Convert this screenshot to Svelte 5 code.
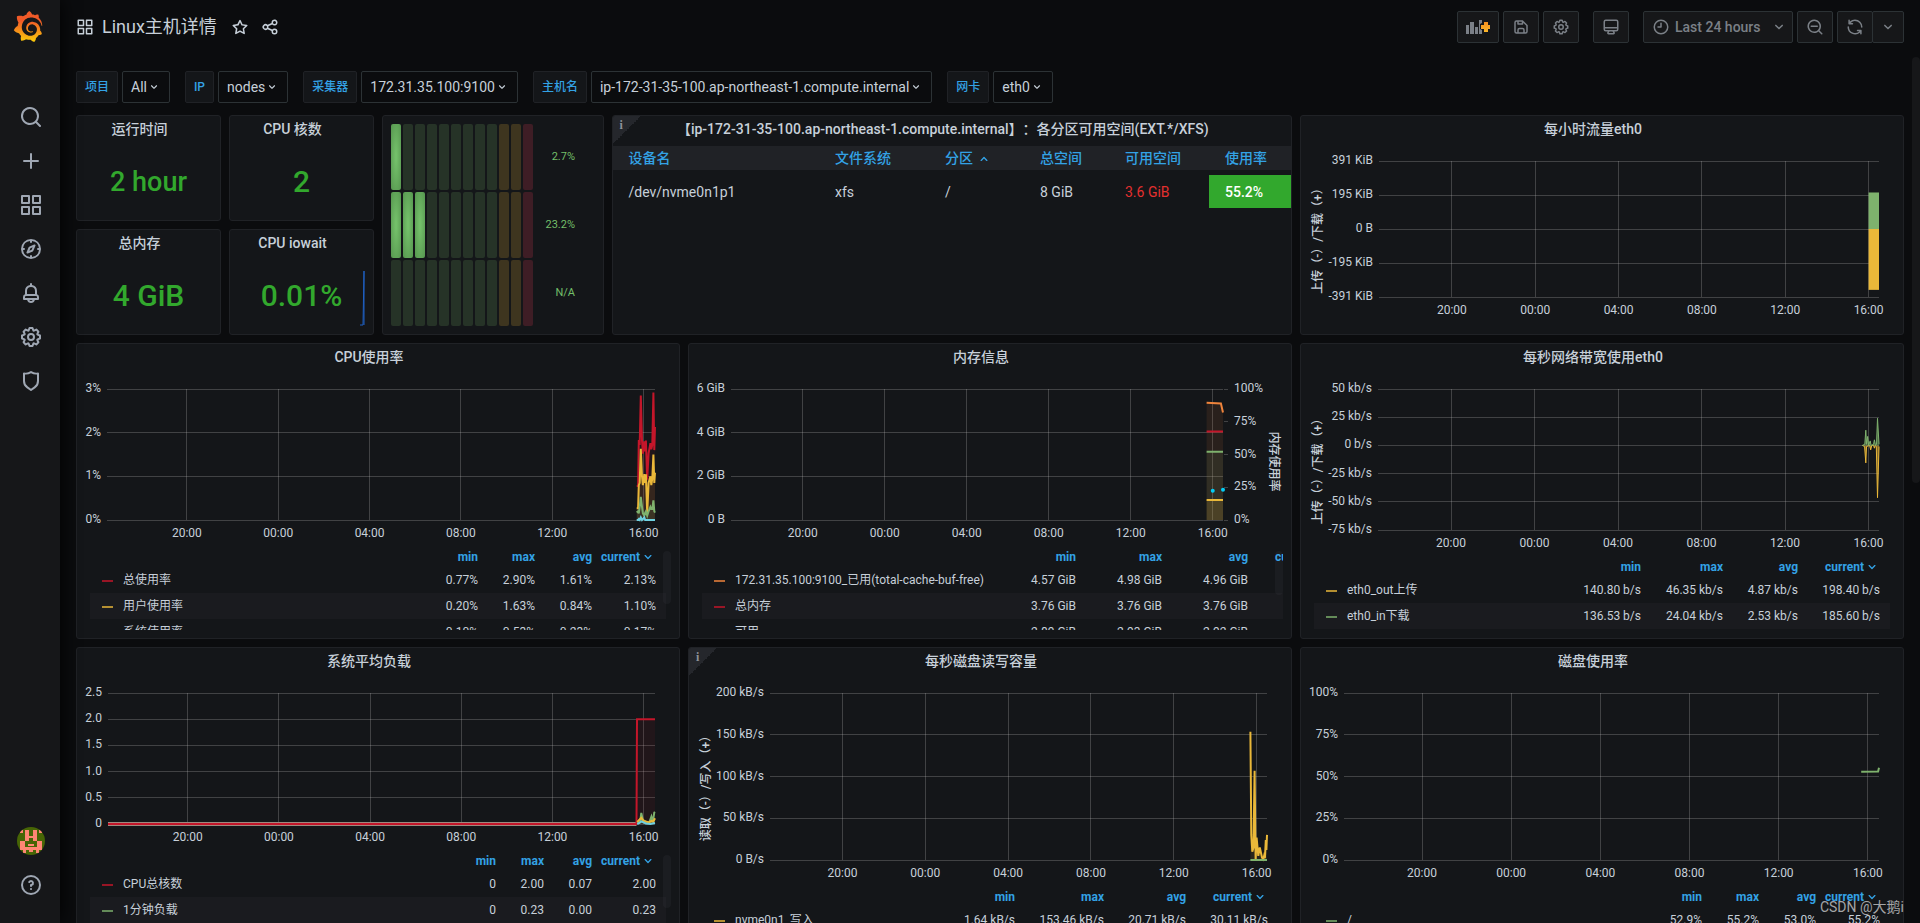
<script>
  const ICONS = {
    search: 'M21.71,20.29,18,16.61A9,9,0,1,0,16.61,18l3.68,3.68a1,1,0,0,0,1.42,0A1,1,0,0,0,21.71,20.29ZM11,18a7,7,0,1,1,7-7A7,7,0,0,1,11,18Z',
    plus: 'M19,11H13V5a1,1,0,0,0-2,0v6H5a1,1,0,0,0,0,2h6v6a1,1,0,0,0,2,0V13h6a1,1,0,0,0,0-2Z',
    apps: 'M10,13H3a1,1,0,0,0-1,1v7a1,1,0,0,0,1,1h7a1,1,0,0,0,1-1V14A1,1,0,0,0,10,13ZM9,20H4V15H9ZM21,2H14a1,1,0,0,0-1,1v7a1,1,0,0,0,1,1h7a1,1,0,0,0,1-1V3A1,1,0,0,0,21,2ZM20,9H15V4h5Zm1,4H14a1,1,0,0,0-1,1v7a1,1,0,0,0,1,1h7a1,1,0,0,0,1-1V14A1,1,0,0,0,21,13Zm-1,7H15V15h5ZM10,2H3A1,1,0,0,0,2,3v7a1,1,0,0,0,1,1h7a1,1,0,0,0,1-1V3A1,1,0,0,0,10,2ZM9,9H4V4H9Z',
    compass: 'M12,2A10,10,0,1,0,22,12,10,10,0,0,0,12,2Zm1,17.93V19a1,1,0,0,0-2,0v.93A8,8,0,0,1,4.07,13H5a1,1,0,0,0,0-2H4.07A8,8,0,0,1,11,4.07V5a1,1,0,0,0,2,0V4.07A8,8,0,0,1,19.93,11H19a1,1,0,0,0,0,2h.93A8,8,0,0,1,13,19.93ZM15.14,7.55l-5,2.12a1,1,0,0,0-.52.52l-2.12,5a1,1,0,0,0,.21,1.1,1,1,0,0,0,.7.29.93.93,0,0,0,.4-.08l5-2.12a1,1,0,0,0,.52-.52l2.12-5a1,1,0,0,0-1.31-1.31Zm-2.49,5.1-2.28,1,1-2.28,2.28-1Z',
    bell: 'M18,13.18V10a6,6,0,0,0-5-5.91V3a1,1,0,0,0-2,0V4.09A6,6,0,0,0,6,10v3.18A3,3,0,0,0,4,16v2a1,1,0,0,0,1,1H8.14a4,4,0,0,0,7.72,0H19a1,1,0,0,0,1-1V16A3,3,0,0,0,18,13.18ZM8,10a4,4,0,0,1,8,0v3H8Zm4,10a2,2,0,0,1-1.72-1h3.44A2,2,0,0,1,12,20Zm6-3H6V16a1,1,0,0,1,1-1H17a1,1,0,0,1,1,1Z',
    cog: 'M21.32,9.55l-1.89-.63.89-1.78A1,1,0,0,0,20.13,6L18,3.87a1,1,0,0,0-1.15-.19l-1.78.89-.63-1.89A1,1,0,0,0,13.5,2h-3a1,1,0,0,0-.95.68L8.92,4.57,7.14,3.68A1,1,0,0,0,6,3.87L3.87,6a1,1,0,0,0-.19,1.15l.89,1.78-1.89.63A1,1,0,0,0,2,10.5v3a1,1,0,0,0,.68.95l1.89.63-.89,1.78A1,1,0,0,0,3.87,18L6,20.13a1,1,0,0,0,1.15.19l1.78-.89.63,1.89a1,1,0,0,0,.95.68h3a1,1,0,0,0,.95-.68l.63-1.89,1.78.89A1,1,0,0,0,18,20.13L20.13,18a1,1,0,0,0,.19-1.15l-.89-1.78,1.89-.63A1,1,0,0,0,22,13.5v-3A1,1,0,0,0,21.32,9.55ZM20,12.78l-1.2.4A2,2,0,0,0,17.64,16l.57,1.14-1.1,1.1L16,17.64a2,2,0,0,0-2.79,1.16l-.4,1.2H11.22l-.4-1.2A2,2,0,0,0,8,17.64l-1.14.57-1.1-1.1L6.36,16A2,2,0,0,0,5.2,13.18L4,12.78V11.22l1.2-.4A2,2,0,0,0,6.36,8L5.79,6.89l1.1-1.1L8,6.36A2,2,0,0,0,10.82,5.2l.4-1.2h1.56l.4,1.2A2,2,0,0,0,16,6.36l1.14-.57,1.1,1.1L17.64,8a2,2,0,0,0,1.16,2.79l1.2.4ZM12,8a4,4,0,1,0,4,4A4,4,0,0,0,12,8Zm0,6a2,2,0,1,1,2-2A2,2,0,0,1,12,14Z',
    shield: 'M19.63,3.65a1,1,0,0,0-.84-.2,8,8,0,0,1-6.22-1.27,1,1,0,0,0-1.14,0A8,8,0,0,1,5.21,3.45a1,1,0,0,0-.84.2A1,1,0,0,0,4,4.43v7.45a9,9,0,0,0,3.77,7.33l3.65,2.6a1,1,0,0,0,1.16,0l3.65-2.6A9,9,0,0,0,20,11.88V4.43A1,1,0,0,0,19.63,3.65ZM18,11.88a7,7,0,0,1-2.93,5.7L12,19.77,8.93,17.58A7,7,0,0,1,6,11.88V5.58a10,10,0,0,0,6-1.39,10,10,0,0,0,6,1.39Z',
    help: 'M11.29,15.29a1.58,1.58,0,0,0-.12.15.76.76,0,0,0-.09.18.64.64,0,0,0-.06.18,1.36,1.36,0,0,0,0,.2.84.84,0,0,0,.08.38.9.9,0,0,0,.54.54.94.94,0,0,0,.76,0,.9.9,0,0,0,.54-.54A1,1,0,0,0,13,16a1,1,0,0,0-.29-.71A1,1,0,0,0,11.29,15.29ZM12,2A10,10,0,1,0,22,12,10,10,0,0,0,12,2Zm0,18a8,8,0,1,1,8-8A8,8,0,0,1,12,20ZM12,7A3,3,0,0,0,9.4,8.5a1,1,0,1,0,1.73,1A1,1,0,0,1,12,9a1,1,0,0,1,0,2,1,1,0,0,0-1,1v1a1,1,0,0,0,2,0v-.18A3,3,0,0,0,12,7Z',
    star: 'M22,9.67A1,1,0,0,0,21.14,9l-5.69-.83L12.9,3a1,1,0,0,0-1.8,0L8.55,8.16,2.86,9a1,1,0,0,0-.81.68,1,1,0,0,0,.25,1l4.13,4-1,5.68A1,1,0,0,0,6.9,21.44L12,18.77l5.1,2.67a.93.93,0,0,0,.46.12,1,1,0,0,0,.59-.19,1,1,0,0,0,.4-1l-1-5.68,4.13-4A1,1,0,0,0,22,9.67Zm-6.15,4a1,1,0,0,0-.29.88l.72,4.2-3.76-2a1.06,1.06,0,0,0-.94,0l-3.76,2,.72-4.2a1,1,0,0,0-.29-.88l-3-3,4.21-.61a1,1,0,0,0,.76-.55L12,5.7l1.88,3.82a1,1,0,0,0,.76.55l4.21.61Z',
    share: 'M18,14a4,4,0,0,0-3.08,1.48l-5.1-2.35a3.64,3.64,0,0,0,0-2.26l5.1-2.35A4,4,0,1,0,14,6a4.17,4.17,0,0,0,.07.71L8.79,9.14a4,4,0,1,0,0,5.72l5.28,2.43A4.17,4.17,0,0,0,14,18a4,4,0,1,0,4-4ZM18,4a2,2,0,1,1-2,2A2,2,0,0,1,18,4ZM6,14a2,2,0,1,1,2-2A2,2,0,0,1,6,14Zm12,6a2,2,0,1,1,2-2A2,2,0,0,1,18,20Z',
    save: 'M20.71,9.29l-6-6a1,1,0,0,0-.32-.21A1.09,1.09,0,0,0,14,3H6A3,3,0,0,0,3,6V18a3,3,0,0,0,3,3H18a3,3,0,0,0,3-3V10A1,1,0,0,0,20.71,9.29ZM9,5h4V7H9Zm6,14H9V16a1,1,0,0,1,1-1h4a1,1,0,0,1,1,1Zm4-1a1,1,0,0,1-1,1H17V16a3,3,0,0,0-3-3H10a3,3,0,0,0-3,3v3H6a1,1,0,0,1-1-1V6A1,1,0,0,1,6,5H7V8A1,1,0,0,0,8,9h6a1,1,0,0,0,1-1V6.41l4,4Z',
    monitor: 'M19,2H5A3,3,0,0,0,2,5V15a3,3,0,0,0,3,3H7.64l-.58,1a2,2,0,0,0,0,2,2,2,0,0,0,1.75,1h6.46A2,2,0,0,0,17,21a2,2,0,0,0,0-2l-.59-1H19a3,3,0,0,0,3-3V5A3,3,0,0,0,19,2ZM8.77,20,10,18H14l1.2,2ZM20,15a1,1,0,0,1-1,1H5a1,1,0,0,1-1-1V14H20Zm0-3H4V5A1,1,0,0,1,5,4H19a1,1,0,0,1,1,1Z',
    clock: 'M12,2A10,10,0,1,0,22,12,10,10,0,0,0,12,2Zm0,18a8,8,0,1,1,8-8A8,8,0,0,1,12,20ZM12,6a1,1,0,0,0-1,1v4H8a1,1,0,0,0,0,2h4a1,1,0,0,0,1-1V7A1,1,0,0,0,12,6Z',
    zoomOut: 'M21.71,20.29,18,16.61A9,9,0,1,0,16.61,18l3.68,3.68a1,1,0,0,0,1.42,0A1,1,0,0,0,21.71,20.29ZM11,18a7,7,0,1,1,7-7A7,7,0,0,1,11,18Zm4-8H7a1,1,0,0,0,0,2h8a1,1,0,0,0,0-2Z',
    sync: 'M19.91,15.51H15.38a1,1,0,0,0,0,2h2.4A8,8,0,0,1,4,12a1,1,0,1,0-2,0,10,10,0,0,0,16.88,7.23V21a1,1,0,0,0,2,0V16.5A1,1,0,0,0,19.91,15.51ZM12,2A10,10,0,0,0,5.12,4.77V3a1,1,0,0,0-2,0V7.5a1,1,0,0,0,1,1h4.5a1,1,0,0,0,0-2H6.22A8,8,0,0,1,20,12a1,1,0,0,0,2,0A10,10,0,0,0,12,2Z',
    down: 'M17,9.17a1,1,0,0,0-1.41,0L12,12.71,8.46,9.17a1,1,0,0,0-1.41,0,1,1,0,0,0,0,1.42l4.24,4.24a1,1,0,0,0,1.42,0L17,10.59A1,1,0,0,0,17,9.17Z',
    up: 'M17,13.41,12.71,9.17a1,1,0,0,0-1.42,0L7.05,13.41a1,1,0,0,0,0,1.42,1,1,0,0,0,1.41,0L12,11.29l3.54,3.54a1,1,0,0,0,.7.29,1,1,0,0,0,.71-.29A1,1,0,0,0,17,13.41Z'
  };

  const RED = '#c4162a';
  const YELLOW = '#eab839';
  const GREEN = '#7eb26d';
  const CYAN = '#6ed0e0';
  const ORANGE = '#ef843c';

  const nav = [
    ['search', 'Search'], ['plus', 'Create'], ['apps', 'Dashboards'], ['compass', 'Explore'],
    ['bell', 'Alerting'], ['cog', 'Configuration'], ['shield', 'Server Admin']
  ];

  const filters = [
    ['项目', 'All'], ['IP', 'nodes'], ['采集器', '172.31.35.100:9100'],
    ['主机名', 'ip-172-31-35-100.ap-northeast-1.compute.internal'], ['网卡', 'eth0']
  ];

  const gauge = [['2.7%', 1], ['23.2%', 3], ['N/A', 0]];
  const cells = Array.from({ length: 12 }, (_, i) => (i < 9 ? 'ok' : i < 11 ? 'warn' : 'crit'));

  // The time axis covers 24 hours, starting at 16:30.
  const hours = [['20:00', 3.5], ['00:00', 7.5], ['04:00', 11.5], ['08:00', 15.5], ['12:00', 19.5], ['16:00', 23.5]];

  const cpuT = [23.2, 23.26, 23.29, 23.33, 23.38, 23.43, 23.47, 23.53, 23.57, 23.6, 23.66, 23.72, 23.8, 23.84, 23.88, 23.93, 23.97, 24];
  const zip = (v) => v.map((y, i) => [cpuT[i], y]);

  let charts = $state([
    {
      title: '每小时流量eth0', w: 602, rows: 'short', left: 79, right: 25, bottom: 182, min: -391, max: 391,
      ticks: [[391, '391 KiB'], [195.5, '195 KiB'], [0, '0 B'], [-195.5, '-195 KiB'], [-391, '-391 KiB']],
      yTitle: '上传（-）/下载（+）', series: [],
      bars: [[23.5, 24, 0, 210, GREEN], [23.5, 24, -350, 0, YELLOW]]
    },
    {
      title: 'CPU使用率', w: 602, left: 31, right: 25, bottom: 177, min: 0, max: 3,
      ticks: [[3, '3%'], [2, '2%'], [1, '1%'], [0, '0%']],
      series: [
        { c: RED, fill: 0.08, pts: zip([0.78, 0.78, 1.83, 1.72, 2.85, 1.83, 1.52, 1.8, 1.57, 1.82, 0.92, 1.53, 1.76, 1.62, 1.72, 2.92, 1.6, 2.13]) },
        { c: YELLOW, fill: 0.1, pts: zip([0.27, 0.27, 0.8, 0.85, 1.63, 1, 0.8, 1.05, 0.85, 1.05, 0.15, 0.85, 1, 0.8, 0.95, 1.5, 0.85, 1.08]) },
        { c: GREEN, fill: 0.1, pts: zip([0.17, 0.2, 0.15, 0.3, 0.53, 0.3, 0.15, 0.1, 0.17, 0.2, 0.1, 0.2, 0.3, 0.25, 0.25, 0.45, 0.2, 0.17]) },
        { c: CYAN, pts: zip([0, 0, 0.02, 0, 0.06, 0, 0.02, 0.06, 0, 0, 0, 0, 0, 0, 0, 0, 0, 0]) }
      ],
      legend: {
        cols: [57, 57, 57, 64], thumb: 53,
        rows: [[RED, '总使用率', '0.77%', '2.90%', '1.61%', '2.13%'], [YELLOW, '用户使用率', '0.20%', '1.63%', '0.84%', '1.10%'], [GREEN, '系统使用率', '0.10%', '0.53%', '0.23%', '0.17%']]
      }
    },
    {
      title: '内存信息', w: 602, left: 43, right: 69, bottom: 177, min: 0, max: 6,
      ticks: [[6, '6 GiB'], [4, '4 GiB'], [2, '2 GiB'], [0, '0 B']],
      rightTicks: [[6, '100%'], [4.5, '75%'], [3, '50%'], [1.5, '25%'], [0, '0%']],
      rightTitle: '内存使用率',
      series: [
        { c: ORANGE, fill: 0.1, pts: [[23.2, 5.37], [23.9, 5.34], [24, 4.93]] },
        { c: RED, pts: [[23.2, 4.05], [24, 4.05]] },
        { c: GREEN, fill: 0.1, pts: [[23.2, 3.13], [24, 3.13]] },
        { c: YELLOW, fill: 0.14, pts: [[23.2, 0.91], [24, 0.91]] }
      ],
      dots: [[23.5, 1.34], [24, 1.39]],
      legend: {
        cols: [86, 86, 86, 82], thumb: 44, wide: true,
        rows: [[ORANGE, '172.31.35.100:9100_已用(total-cache-buf-free)', '4.57 GiB', '4.98 GiB', '4.96 GiB', '4.57 GiB'], [RED, '总内存', '3.76 GiB', '3.76 GiB', '3.76 GiB', '3.76 GiB'], [GREEN, '可用', '2.89 GiB', '2.93 GiB', '2.92 GiB', '2.91 GiB']]
      }
    },
    {
      title: '每秒网络带宽使用eth0', w: 602, left: 78, right: 25, bottom: 187, min: -75, max: 50,
      ticks: [[50, '50 kb/s'], [25, '25 kb/s'], [0, '0 b/s'], [-25, '-25 kb/s'], [-50, '-50 kb/s'], [-75, '-75 kb/s']],
      yTitle: '上传（-）/下载（+）',
      series: [
        { c: YELLOW, thin: true, fill: 0.5, pts: [[23.2, 0], [23.31, -1], [23.37, -15.5], [23.4, -1], [23.55, 0], [23.6, -4], [23.65, 0], [23.74, 0], [23.78, -2.5], [23.83, 0], [23.87, -1], [23.93, -46.35], [24, -1]] },
        { c: GREEN, thin: true, fill: 0.5, pts: [[23.2, 0], [23.32, 1], [23.37, 13.5], [23.4, 1], [23.46, 8], [23.5, 0], [23.58, 4], [23.62, 0], [23.74, 1], [23.78, 5], [23.83, 0], [23.88, 1], [23.93, 24], [24, 1]] }
      ],
      legend: {
        cols: [82, 82, 75, 82],
        rows: [[YELLOW, 'eth0_out上传', '140.80 b/s', '46.35 kb/s', '4.87 kb/s', '198.40 b/s'], [GREEN, 'eth0_in下载', '136.53 b/s', '24.04 kb/s', '2.53 kb/s', '185.60 b/s']]
      }
    },
    {
      title: '系统平均负载', w: 602, left: 32, right: 25, bottom: 177, min: 0, max: 2.5,
      ticks: [[2.5, '2.5'], [2, '2.0'], [1.5, '1.5'], [1, '1.0'], [0.5, '0.5'], [0, '0']],
      series: [
        { c: '#a08a80', thick: true, pts: [[0, 0], [23.19, 0]] },
        { c: RED, fill: 0.08, pts: [[0, 0], [23.19, 0], [23.21, 2], [24, 2]] },
        { c: GREEN, fill: 0.1, pts: [[23.22, 0.03], [23.35, 0.05], [23.4, 0.21], [23.46, 0.08], [23.6, 0.04], [23.75, 0.03], [23.84, 0.14], [23.9, 0.04], [23.97, 0.22], [24, 0.23]] },
        { c: YELLOW, fill: 0.1, pts: [[23.22, 0.04], [23.4, 0.12], [23.5, 0.06], [23.75, 0.03], [23.84, 0.06], [23.92, 0.04], [24, 0.11]] },
        { c: CYAN, pts: [[23.22, 0], [23.32, 0.02], [23.4, 0.05], [23.6, 0.01], [23.8, 0], [24, 0.02]] }
      ],
      legend: {
        cols: [48, 48, 48, 64], thumb: 53,
        rows: [[RED, 'CPU总核数', '0', '2.00', '0.07', '2.00'], [GREEN, '1分钟负载', '0', '0.23', '0.00', '0.23'], [YELLOW, '5分钟负载', '0', '0.12', '0.00', '0.11']]
      }
    },
    {
      title: '每秒磁盘读写容量', w: 602, info: true, left: 82, right: 25, bottom: 213, min: 0, max: 200,
      ticks: [[200, '200 kB/s'], [150, '150 kB/s'], [100, '100 kB/s'], [50, '50 kB/s'], [0, '0 B/s']],
      yTitle: '读取（-）/写入（+）',
      series: [
        { c: YELLOW, fill: 0.1, pts: [[23.2, 153.5], [23.24, 30], [23.29, 10], [23.35, 15], [23.4, 107], [23.45, 1], [23.5, 27], [23.58, 5], [23.65, 15], [23.76, 3], [23.82, 1], [23.86, 5], [23.9, 2], [23.94, 24], [23.97, 12], [24, 30]] },
        { c: GREEN, pts: [[23.2, 0], [24, 0]] }
      ],
      legend: { cols: [89, 89, 82, 82], rows: [[YELLOW, 'nvme0n1_写入', '1.64 kB/s', '153.46 kB/s', '20.71 kB/s', '30.11 kB/s']] }
    },
    {
      title: '磁盘使用率', w: 602, left: 44, right: 25, bottom: 213, min: 0, max: 100,
      ticks: [[100, '100%'], [75, '75%'], [50, '50%'], [25, '25%'], [0, '0%']],
      series: [{ c: GREEN, pts: [[23.2, 52.9], [23.96, 53], [24, 55.2]] }],
      legend: { cols: [57, 57, 57, 64], rows: [[GREEN, '/', '52.9%', '55.2%', '53.0%', '55.2%']] }
    }
  ]);

  const HEAD = 28;
  const TOP = 46 - HEAD;
  const base = (c) => c.bottom - HEAD;
  const px = (c, t) => c.left - 1 + (t / 24) * (c.w - c.left - c.right + 2);
  const py = (c, v) => TOP + ((c.max - v) / (c.max - c.min)) * (base(c) - TOP);
  const crisp = (n) => Math.floor(n) + 0.5;
  const line = (c, pts) => pts.map(([t, v]) => `${px(c, t).toFixed(1)},${py(c, v).toFixed(1)}`).join(' ');
  const area = (c, pts) =>
    `${px(c, pts[0][0])},${py(c, 0)} ${line(c, pts)} ${px(c, pts[pts.length - 1][0])},${py(c, 0)}`;
</script>

{#snippet icon(name, size)}
  <svg class="icon" width={size} height={size} viewBox="0 0 24 24" aria-hidden="true"><path d={ICONS[name]} /></svg>
{/snippet}

{#snippet corner()}
  <span class="corner"><b>i</b></span>
{/snippet}

{#snippet chart(c)}
  <section class="panel graph" class:short={c.rows === 'short'} bind:clientWidth={c.w}>
    {#if c.info}{@render corner()}{/if}
    <h2>{c.title}</h2>
    <svg class="plot" width="100%" height={base(c) + 27} role="img" aria-label={c.title}>
      {#each c.ticks as [v, label]}
        <line class="grid" x1={c.left - 1} x2={c.w - c.right + 1} y1={crisp(py(c, v))} y2={crisp(py(c, v))} />
        <text x={c.left - 7} y={py(c, v) + 3} text-anchor="end">{label}</text>
      {/each}
      {#each hours as [label, t]}
        <line class="grid" x1={crisp(px(c, t))} x2={crisp(px(c, t))} y1={TOP} y2={base(c)} />
        <text x={px(c, t)} y={base(c) + 17} text-anchor="middle">{label}</text>
      {/each}
      {#each c.rightTicks ?? [] as [v, label]}
        <line class="grid" x1={c.w - c.right + 2} x2={c.w - c.right + 6} y1={crisp(py(c, v))} y2={crisp(py(c, v))} />
        <text x={c.w - c.right + 12} y={py(c, v) + 3}>{label}</text>
      {/each}
      {#each c.bars ?? [] as [t0, t1, lo, hi, color]}
        <rect x={px(c, t0)} width={px(c, t1) - px(c, t0)} y={py(c, hi)} height={py(c, lo) - py(c, hi)} fill={color} />
      {/each}
      {#each c.series as s}
        {#if s.fill}<polygon points={area(c, s.pts)} fill={s.c} fill-opacity={s.fill} />{/if}
        <polyline points={line(c, s.pts)} fill="none" stroke={s.c} stroke-width={s.thick ? 4 : s.thin ? 1 : 2} />
      {/each}
      {#each c.dots ?? [] as [t, v]}
        <circle cx={px(c, t)} cy={py(c, v)} r="2" fill="#05ccf5" />
      {/each}
      {#if c.yTitle}
        <text class="axis" text-anchor="middle" transform="translate(21 {(TOP + base(c)) / 2 + 9}) rotate(-90)">{c.yTitle}</text>
      {/if}
      {#if c.rightTitle}
        <text class="axis" text-anchor="middle" transform="translate({c.w - 21} {(TOP + base(c)) / 2 + 7}) rotate(90)">{c.rightTitle}</text>
      {/if}
    </svg>
    {#if c.legend}
      <div class="legend">
        <table class:wide={c.legend.wide}>
          <colgroup>
            <col />
            {#each c.legend.cols as w}<col style:width="{w}px" />{/each}
          </colgroup>
          <thead>
            <tr><th></th><th>min</th><th>max</th><th>avg</th><th class="sorted"><span>current{@render icon('down', 16)}</span></th></tr>
          </thead>
          <tbody>
            {#each c.legend.rows as [color, name, ...values]}
              <tr>
                <td class="name"><i style:background={color}></i>{name}</td>
                {#each values as v}<td>{v}</td>{/each}
              </tr>
            {/each}
          </tbody>
        </table>
        {#if c.legend.thumb}<span class="thumb" style:height="{c.legend.thumb}px"></span>{/if}
      </div>
    {/if}
  </section>
{/snippet}

<div class="app">
  <nav class="side" aria-label="Main">
    <a class="logo" href="#home" aria-label="Grafana">
      <svg width="30" height="31" viewBox="0 0 351 365" aria-hidden="true">
        <defs>
          <linearGradient id="flame" x1="175" y1="445" x2="175" y2="114" gradientUnits="userSpaceOnUse">
            <stop offset="0" stop-color="#fff100" /><stop offset="1" stop-color="#f05a28" />
          </linearGradient>
        </defs>
        <path fill="url(#flame)" d="M342,161.2c-0.6-6.1-1.6-13.1-3.6-20.9c-2-7.7-5-16.2-9.4-25c-4.4-8.8-10.1-17.9-17.5-26.8c-2.9-3.5-6.1-6.9-9.5-10.2c5.1-20.3-6.2-37.9-6.2-37.9c-19.5-1.2-31.9,6.1-36.5,9.4c-0.8-0.3-1.5-0.7-2.3-1c-3.3-1.3-6.7-2.6-10.3-3.7c-3.5-1.1-7.1-2.1-10.8-3c-3.7-0.9-7.4-1.6-11.2-2.2c-0.7-0.1-1.3-0.2-2-0.3c-8.5-27.2-32.9-38.6-32.9-38.6c-27.3,17.3-32.4,41.5-32.4,41.5s-0.1,0.5-0.3,1.4c-1.5,0.4-3,0.9-4.5,1.3c-2.1,0.6-4.2,1.4-6.2,2.2c-2.1,0.8-4.1,1.6-6.2,2.5c-4.1,1.8-8.2,3.8-12.2,6c-3.9,2.2-7.7,4.6-11.4,7.1c-0.5-0.2-1-0.4-1-0.4c-37.8-14.4-71.3,2.9-71.3,2.9c-3.1,40.2,15.1,65.5,18.7,70.1c-0.9,2.5-1.7,5-2.5,7.5c-2.8,9.1-4.9,18.4-6.2,28.1c-0.2,1.4-0.4,2.8-0.5,4.2C18.8,192.7,8.5,228,8.5,228c29.1,33.5,63.1,35.6,63.1,35.6c0,0,0.1-0.1,0.1-0.1c4.3,7.7,9.3,15,14.9,21.9c2.4,2.9,4.8,5.6,7.4,8.3c-10.6,30.4,1.5,55.6,1.5,55.6c32.4,1.2,53.7-14.2,58.2-17.7c3.2,1.1,6.5,2.1,9.8,2.9c10,2.6,20.2,4.1,30.4,4.5c2.5,0.1,5.1,0.2,7.6,0.1l1.2,0l0.8,0l1.6,0l1.6-0.1l0,0.1c15.3,21.8,42.1,24.9,42.1,24.9c19.1-20.1,20.2-40.1,20.2-44.4l0,0c0,0,0-0.1,0-0.3c0-0.4,0-0.6,0-0.6l0,0c0-0.3,0-0.6,0-0.9c4-2.8,7.8-5.8,11.4-9.1c7.6-6.9,14.3-14.8,19.9-23.3c0.5-0.8,1-1.6,1.5-2.4c21.6,1.2,36.9-13.4,36.9-13.4c-3.6-22.5-16.4-33.5-19.1-35.6l0,0c0,0-0.1-0.1-0.3-0.2c-0.2-0.1-0.2-0.2-0.2-0.2c0,0,0,0,0,0c-0.1-0.1-0.3-0.2-0.5-0.3c0.1-1.4,0.2-2.7,0.3-4.1c0.2-2.4,0.2-4.9,0.2-7.3l0-1.8l0-0.9l0-0.5c0-0.6,0-0.4,0-0.6l-0.1-1.5l-0.1-2c0-0.7-0.1-1.3-0.2-1.9c-0.1-0.6-0.1-1.3-0.2-1.9l-0.2-1.9l-0.3-1.9c-0.4-2.5-0.8-4.9-1.4-7.4c-2.3-9.7-6.1-18.9-11-27.2c-5-8.3-11.2-15.6-18.3-21.8c-7-6.2-14.9-11.2-23.1-14.9c-8.3-3.7-16.9-6.1-25.5-7.2c-4.3-0.6-8.6-0.8-12.9-0.7l-1.6,0l-0.4,0c-0.1,0-0.6,0-0.5,0l-0.7,0l-1.6,0.1c-0.6,0-1.2,0.1-1.7,0.1c-2.2,0.2-4.4,0.5-6.5,0.9c-8.6,1.6-16.7,4.7-23.8,9c-7.1,4.3-13.3,9.6-18.3,15.6c-5,6-8.9,12.7-11.6,19.6c-2.7,6.9-4.2,14.1-4.6,21c-0.1,1.7-0.1,3.5-0.1,5.2c0,0.4,0,0.9,0,1.3l0.1,1.4c0.1,0.8,0.1,1.7,0.2,2.5c0.3,3.5,1,6.9,1.9,10.1c1.9,6.5,4.9,12.4,8.6,17.4c3.7,5,8.2,9.1,12.9,12.4c4.7,3.2,9.8,5.5,14.8,7c5,1.5,10,2.1,14.7,2.1c0.6,0,1.2,0,1.7,0c0.3,0,0.6,0,0.9,0c0.3,0,0.6,0,0.9-0.1c0.5,0,1-0.1,1.5-0.1c0.1,0,0.3,0,0.4-0.1l0.5-0.1c0.3,0,0.6-0.1,0.9-0.1c0.6-0.1,1.1-0.2,1.7-0.3c0.6-0.1,1.1-0.2,1.6-0.4c1.1-0.2,2.1-0.6,3.1-0.9c2-0.7,4-1.5,5.7-2.4c1.8-0.9,3.4-2,5-3c0.4-0.3,0.9-0.6,1.3-1c1.6-1.3,1.9-3.7,0.6-5.3c-1.1-1.4-3.1-1.8-4.7-0.9c-0.4,0.2-0.8,0.4-1.2,0.6c-1.4,0.7-2.8,1.3-4.3,1.8c-1.5,0.5-3.1,0.9-4.7,1.2c-0.8,0.1-1.6,0.2-2.5,0.3c-0.4,0-0.8,0.1-1.3,0.1c-0.4,0-0.9,0-1.2,0c-0.4,0-0.8,0-1.2,0c-0.5,0-1,0-1.5-0.1c-0.4,0-0.8-0.1-1.3-0.1c-0.5-0.1-0.9-0.1-1.4-0.2c-3.7-0.5-7.4-1.6-10.9-3.2c-3.6-1.6-7-3.8-10.1-6.6c-3.1-2.8-5.8-6.1-7.9-9.9c-2.1-3.8-3.6-8-4.3-12.4c-0.3-2.2-0.5-4.5-0.4-6.7c0-0.6,0.1-1.2,0.1-1.8l0-0.8c0-0.3,0.1-0.6,0.1-0.9c0.1-1.2,0.3-2.4,0.5-3.6c1.7-9.6,6.5-19,13.9-26.1c1.9-1.8,3.9-3.4,6-4.9c2.1-1.5,4.4-2.8,6.8-3.9c2.4-1.1,4.8-2,7.4-2.7c2.5-0.7,5.1-1.1,7.8-1.4c1.3-0.1,2.6-0.2,4-0.2c0.4,0,0.6,0,0.9,0l1.1,0l0.7,0c0.3,0,0,0,0.1,0l0.3,0l1.1,0.1c2.9,0.2,5.7,0.6,8.5,1.3c5.6,1.2,11.1,3.3,16.2,6.1c10.2,5.7,18.9,14.5,24.2,25.1c2.7,5.3,4.6,11,5.5,16.9c0.2,1.5,0.4,3,0.5,4.5l0.1,1.1l0.1,1.1c0,0.4,0,0.8,0,1.1c0,0.4,0,0.8,0,1.1l0,1l0,1.1c0,0.7-0.1,1.9-0.1,2.6c-0.1,1.6-0.3,3.3-0.5,4.9c-0.2,1.6-0.5,3.2-0.8,4.8c-0.3,1.6-0.7,3.2-1.1,4.7c-0.8,3.1-1.8,6.2-3,9.3c-2.4,6-5.6,11.8-9.4,17.1c-7.7,10.6-18.2,19.2-30.2,24.7c-6,2.7-12.3,4.7-18.8,5.7c-3.2,0.6-6.5,0.9-9.8,1l-0.6,0l-0.5,0l-1.1,0l-1.6,0l-0.8,0c-1.8,0-3.7-0.1-5.5-0.3c-7-0.5-13.9-1.8-20.7-3.7c-6.7-1.9-13.2-4.6-19.4-7.8c-12.3-6.6-23.4-15.6-32-26.5c-4.3-5.4-8.1-11.3-11.2-17.4c-3.1-6.1-5.6-12.6-7.4-19.1c-1.8-6.6-2.9-13.3-3.4-20.1l-0.1-1.3l0-6c0-0.8,0-1.7,0-2.5c0.1-3.3,0.4-6.8,0.8-10.2c0.4-3.4,1-6.9,1.7-10.3c0.7-3.4,1.5-6.8,2.5-10.2c1.9-6.7,4.3-13.2,7.1-19.3c5.7-12.2,13.1-23.1,22-31.8c2.2-2.2,4.5-4.2,6.9-6.2c2.4-1.9,4.9-3.7,7.5-5.4c2.5-1.7,5.2-3.2,7.9-4.6c1.3-0.7,2.7-1.4,4.1-2c0.7-0.3,1.4-0.6,2.1-0.9c0.7-0.3,1.4-0.6,2.1-0.9c2.8-1.2,5.7-2.2,8.7-3.1c0.7-0.2,1.5-0.4,2.2-0.7c0.7-0.2,1.5-0.4,2.2-0.6c1.5-0.4,3-0.8,4.5-1.1c0.7-0.2,1.5-0.3,2.3-0.5c0.8-0.2,1.5-0.3,2.3-0.5c0.8-0.1,1.5-0.3,2.3-0.4l1.1-0.2l1.2-0.2c0.8-0.1,1.5-0.2,2.3-0.3c0.9-0.1,1.7-0.2,2.6-0.3c0.7-0.1,1.9-0.2,2.6-0.3c0.5-0.1,1.1-0.1,1.6-0.2l1.1-0.1l0.5-0.1l0.6,0c0.9-0.1,1.7-0.1,2.6-0.2l1.3-0.1l1,0c0.7,0,1.5-0.1,2.2-0.1c2.9-0.1,5.9-0.1,8.8,0c5.8,0.2,11.5,0.9,17,1.9c11.1,2.1,21.5,5.6,31,10.3c9.5,4.6,17.9,10.3,25.3,16.5c0.5,0.4,0.9,0.8,1.4,1.2c0.4,0.4,0.9,0.8,1.3,1.2c0.9,0.8,1.7,1.6,2.6,2.4c0.9,0.8,1.7,1.6,2.5,2.4c0.8,0.8,1.6,1.6,2.4,2.5c3.1,3.3,6,6.6,8.6,10c5.2,6.7,9.4,13.5,12.7,19.9c0.2,0.4,0.4,0.8,0.6,1.2c0.2,0.4,0.4,0.8,0.6,1.2c0.4,0.8,0.8,1.6,1.1,2.4c0.4,0.8,0.7,1.5,1.1,2.3c0.3,0.8,0.7,1.5,1,2.3c1.2,3,2.4,5.9,3.3,8.6c1.5,4.4,2.6,8.3,3.5,11.7c0.3,1.4,1.6,2.3,3,2.1c1.5-0.1,2.6-1.3,2.6-2.8C342.6,170.4,342.5,166.1,342,161.2z" />
      </svg>
    </a>
    <div class="items">
      {#each nav as [name, label]}
        <a href="#{name}" aria-label={label}>{@render icon(name, 24)}</a>
      {/each}
    </div>
    <div class="items bottom">
      <a href="#profile" aria-label="Profile">
        <svg width="28" height="28" viewBox="0 0 28 28" aria-hidden="true">
          <clipPath id="round"><circle cx="14" cy="14" r="14" /></clipPath>
          <g clip-path="url(#round)">
            <rect width="28" height="28" fill="#476505" />
            <path fill="#ff8674" d="M3 3h3v3H3zM22 3h3v3h-3zM8 3h4v6h4V3h4v11h-4v-3h-4v3H8zM3 14h5v6h12v-6h5v9h-3v3h-3v-3h-3v2h-4v-2H9v3H6v-3H3zM11 17h6v2h-6z" />
          </g>
        </svg>
      </a>
      <a href="#help" aria-label="Help">{@render icon('help', 24)}</a>
    </div>
  </nav>

  <div class="page">
    <header>
      {@render icon('apps', 18)}
      <h1>Linux主机详情</h1>
      <button class="bare" aria-label="Mark as favorite">{@render icon('star', 18)}</button>
      <button class="bare" aria-label="Share dashboard">{@render icon('share', 18)}</button>
      <div class="tools">
        <button class="add" aria-label="Add panel">
          <svg width="24" height="16" viewBox="0 0 24 16" aria-hidden="true">
            <defs><linearGradient id="amber" x1="0" y1="0" x2="0" y2="1"><stop offset="0" stop-color="#f79020" /><stop offset="1" stop-color="#fbb72a" /></linearGradient></defs>
            <path fill="#7b8087" d="M0 6h3v9H0zM4 3h4v12H4zM9 8h3v7H9zM13 1h3v3l-2 1v5l2 1v4h-3z" />
            <path fill="url(#amber)" d="M18 3h4v3h3v4h-3v3h-4v-3h-3V6h3z" />
          </svg>
        </button>
        <button aria-label="Save dashboard">{@render icon('save', 18)}</button>
        <button class="gap" aria-label="Dashboard settings">{@render icon('cog', 18)}</button>
        <button class="gap" aria-label="Cycle view mode">{@render icon('monitor', 18)}</button>
        <button class="time">{@render icon('clock', 18)}<span>Last 24 hours</span>{@render icon('down', 18)}</button>
        <button aria-label="Zoom out">{@render icon('zoomOut', 18)}</button>
        <div class="pair">
          <button aria-label="Refresh">{@render icon('sync', 18)}</button>
          <button class="drop" aria-label="Refresh interval">{@render icon('down', 18)}</button>
        </div>
      </div>
    </header>

    <main>
      <div class="filters">
        {#each filters as [label, value], i}
          <div class="filter">
            <label for="var-{i}">{label}</label>
            <button id="var-{i}">{value}{@render icon('down', 14)}</button>
          </div>
        {/each}
      </div>

      <div class="board">
        <section class="panel stat"><h2>运行时间</h2><p class="small">2 hour</p></section>
        <section class="panel stat"><h2>CPU 核数</h2><p>2</p></section>
        <section class="panel stat under"><h2>总内存</h2><p>4 GiB</p></section>
        <section class="panel stat under">
          <h2>CPU iowait</h2><p>0.01%</p>
          <svg class="spark" width="16" height="56" viewBox="0 0 16 56" aria-hidden="true"><path d="M4 55H7L8 1V55" /></svg>
        </section>

        <section class="panel gauge">
          {#each gauge as [value, lit]}
            <div class="bar">
              <div class="cells">
                {#each cells as kind, i}<span class={kind} class:lit={i < lit}></span>{/each}
              </div>
              <span class="value">{value}</span>
            </div>
          {/each}
        </section>

        <section class="panel disks">
          {@render corner()}
          <h2>【ip-172-31-35-100.ap-northeast-1.compute.internal】：各分区可用空间(EXT.*/XFS)</h2>
          <table>
            <colgroup><col class="device" /><col class="fs" /><col class="part" /><col class="total" /><col class="free" /><col class="used" /></colgroup>
            <thead>
              <tr><th>设备名</th><th>文件系统</th><th>分区 {@render icon('up', 16)}</th><th>总空间</th><th>可用空间</th><th>使用率</th></tr>
            </thead>
            <tbody>
              <tr><td>/dev/nvme0n1p1</td><td>xfs</td><td>/</td><td>8 GiB</td><td class="low">3.6 GiB</td><td class="fine">55.2%</td></tr>
            </tbody>
          </table>
        </section>

        {#each charts as c}{@render chart(c)}{/each}
      </div>
    </main>
    <span class="scroll"></span>
  </div>
  <span class="mark">CSDN @大鹅i</span>
</div>

<style>
  :global(body) {
    margin: 0;
    background: #0b0c0e;
  }
  .app {
    display: flex;
    height: 100vh;
    overflow: hidden;
    position: relative;
    font: 14px/20px Roboto, "Noto Sans CJK SC", sans-serif;
    text-spacing-trim: space-all;
    color: #c7d0d9;
  }
  .app * {
    box-sizing: border-box;
  }
  h1, h2, p {
    margin: 0;
    font-weight: 500;
  }
  button {
    font: inherit;
    color: inherit;
    border: 0;
    background: none;
    padding: 0;
    display: inline-flex;
    align-items: center;
    justify-content: center;
    cursor: pointer;
  }
  .icon {
    fill: currentColor;
    flex: none;
    display: block;
  }

  .side {
    flex: none;
    width: 60px;
    display: flex;
    flex-direction: column;
    padding-bottom: 16px;
    background: #161719;
    box-shadow: 0 0 20px #000;
    z-index: 1;
  }
  .logo {
    display: flex;
    justify-content: center;
    height: 95px;
    padding: 11px 4px 0 0;
  }
  .items {
    display: flex;
    flex-direction: column;
    padding-left: 2px;
  }
  .items a {
    height: 44px;
    display: flex;
    align-items: center;
    justify-content: center;
    color: #9fa7b3;
  }
  .bottom {
    margin-top: auto;
  }

  .page {
    flex: 1;
    min-width: 0;
    display: flex;
    flex-direction: column;
    position: relative;
  }
  header {
    flex: none;
    height: 54px;
    display: flex;
    align-items: center;
    padding: 0 16px;
  }
  h1 {
    font-size: 18px;
    font-weight: 400;
    line-height: 24px;
    margin: 0 14px 0 8px;
  }
  .bare + .bare {
    margin-left: 12px;
  }
  .tools {
    margin-left: auto;
    display: flex;
    gap: 4px;
    color: #7b8087;
  }
  .tools button {
    width: 36px;
    height: 32px;
    background: #161719;
    border: 1px solid #2c3235;
    border-radius: 2px;
  }
  .tools .add {
    width: 42px;
  }
  .tools .gap {
    margin-right: 10px;
  }
  .tools .time {
    width: 150px;
    justify-content: flex-start;
    padding: 0 4px 0 8px;
    font-weight: 500;
  }
  .time span {
    margin: 0 auto 0 5px;
  }
  .pair {
    display: flex;
  }
  .tools .drop {
    width: 32px;
    margin-left: -1px;
  }

  main {
    flex: 1;
    min-height: 0;
    overflow: hidden;
    padding: 17px 16px 0;
  }
  .filters {
    display: flex;
    gap: 15px;
    margin-bottom: 12px;
  }
  .filter {
    display: flex;
    gap: 4px;
  }
  .filter label {
    height: 32px;
    padding: 0 8px;
    font-size: 12px;
    font-weight: 500;
    line-height: 30px;
    color: #33a2e5;
    background: #141619;
    border: 1px solid #202226;
    border-radius: 2px;
  }
  .filter button {
    height: 32px;
    padding: 0 8px;
    border: 1px solid #2c3235;
    border-radius: 2px;
  }

  .board {
    display: grid;
    grid-template-columns: repeat(24, minmax(0, 1fr));
    grid-template-rows: 106px 106px;
    grid-auto-rows: 296px;
    gap: 8px;
  }
  .panel {
    position: relative;
    background: #141619;
    border: 1px solid #202226;
    border-radius: 3px;
    overflow: hidden;
  }
  h2 {
    height: 27px;
    font-size: 14px;
    line-height: 27px;
    text-align: center;
    padding-right: 18px;
    white-space: nowrap;
  }
  .stat {
    grid-column: 1 / span 2;
    grid-row: 1;
  }
  .stat + .stat {
    grid-column: 3 / span 2;
  }
  .stat.under {
    grid-column: 1 / span 2;
    grid-row: 2;
  }
  .stat.under + .under {
    grid-column: 3 / span 2;
  }
  .stat p {
    font-size: 30px;
    line-height: 78px;
    text-align: center;
    color: #32a82d;
  }
  .stat p.small {
    font-size: 27px;
  }
  .spark {
    position: absolute;
    right: 1px;
    bottom: 8px;
    fill: none;
    stroke: #1f60c4;
  }

  .gauge {
    grid-column: 5 / span 3;
    grid-row: 1 / span 2;
    display: flex;
    flex-direction: column;
    gap: 2px;
    padding: 8px;
  }
  .bar {
    flex: 1;
    display: flex;
    align-items: center;
  }
  .cells {
    display: flex;
    gap: 2px;
    height: 100%;
    flex: 0 0 142px;
  }
  .cells span {
    flex: 1;
    border-radius: 2px;
  }
  .ok {
    background: #263327;
  }
  .warn {
    background: #3e351f;
  }
  .crit {
    background: #3e1d25;
  }
  .cells .lit {
    background: radial-gradient(ellipse at center, #73bf69 10%, #56964f);
  }
  .value {
    width: 42px;
    text-align: right;
    font-size: 11px;
    color: #73bf69;
  }

  .disks {
    grid-column: 8 / span 9;
    grid-row: 1 / span 2;
  }
  table {
    border-collapse: collapse;
    table-layout: fixed;
  }
  .disks table {
    width: 100%;
    margin-top: 3px;
  }
  .fs { width: 110px; }
  .part { width: 95px; }
  .total { width: 85px; }
  .free { width: 100px; }
  .used { width: 82px; }
  .disks th {
    height: 24px;
    padding: 0 0 0 16px;
    text-align: left;
    font-weight: 500;
    color: #33a2e5;
    background: #202226;
  }
  .disks th .icon {
    display: inline-block;
    vertical-align: middle;
  }
  .disks tbody::before {
    content: "";
    display: block;
    height: 5px;
  }
  .disks td {
    height: 33px;
    padding: 0 0 0 16px;
  }
  .disks .low {
    color: #e5302f;
  }
  .disks .fine {
    font-weight: 500;
    color: #fff;
    background: #32a82d;
  }
  .corner {
    position: absolute;
    top: 0;
    left: 0;
    width: 28px;
    height: 28px;
    background: linear-gradient(135deg, #25272c 50%, transparent 50%);
  }
  .corner b {
    display: block;
    padding: 2px 0 0 7px;
    font: bold 12px/14px "Liberation Serif", serif;
    color: #8e9299;
  }

  .graph {
    grid-column: span 8;
    display: flex;
    flex-direction: column;
    padding-bottom: 8px;
  }
  .graph.short {
    grid-column: 17 / span 8;
    grid-row: 1 / span 2;
  }
  .plot {
    flex: none;
    display: block;
  }
  .plot text {
    font-size: 12px;
    fill: #c7d0d9;
  }
  .plot .axis {
    font-weight: 500;
  }
  .grid {
    stroke: #c8c8c8;
    stroke-opacity: 0.25;
  }
  .legend {
    position: relative;
    flex: 1;
    min-height: 0;
    overflow: hidden;
    margin: 0 8px;
    padding: 0 5px;
    font-size: 12px;
  }
  .legend table {
    width: 100%;
  }
  .legend table.wide {
    width: calc(100% + 62px);
  }
  .legend th {
    height: 20px;
    padding: 0 10px 0 0;
    line-height: 20px;
    font-weight: 700;
    text-align: right;
    color: #33a2e5;
  }
  .sorted span {
    display: flex;
    align-items: center;
    justify-content: flex-end;
  }
  .legend td {
    height: 26px;
    padding: 0 10px 0 0;
    text-align: right;
    white-space: nowrap;
  }
  .legend tbody tr:nth-child(even) {
    background: #1a1b1f;
  }
  .legend .name {
    padding-left: 12px;
    text-align: left;
  }
  .name i {
    display: inline-block;
    width: 11px;
    height: 2px;
    margin-right: 10px;
    vertical-align: middle;
    opacity: 0.75;
  }
  .thumb {
    position: absolute;
    top: 4px;
    right: 0;
    width: 8px;
    border-radius: 4px;
    background: rgba(204, 204, 220, 0.04);
  }
  .scroll {
    position: absolute;
    top: 57px;
    right: 0;
    width: 8px;
    height: 426px;
    border-radius: 4px;
    background: #161719;
  }
  .mark {
    position: absolute;
    right: 16px;
    bottom: 6px;
    color: #a4a5a7;
  }
</style>
